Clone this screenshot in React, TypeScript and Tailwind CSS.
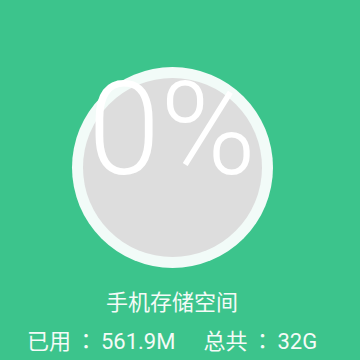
import React from 'react';

const font = { fontFamily: 'Roboto, "Noto Sans CJK SC", sans-serif' };
const colon = { fontFamily: '"Noto Sans CJK TC", sans-serif' };

export default function App() {
  return (
    <div className="w-[360px] h-[360px] bg-[#3cc48c] overflow-hidden" style={font}>
      <div className="w-[344px] flex flex-col items-center pt-[67px]">
        <div className="relative w-[201px] h-[201px] rounded-full bg-[#f2fbf8] p-[11px]">
          <div className="w-full h-full rounded-full bg-[#dddddd]" />
          <div className="absolute left-0 right-0 top-[-12px] text-center text-white text-[130px] leading-[150px] font-light">
            0%
          </div>
        </div>
        <div className="mt-[22px] text-[22px] leading-[26px] text-[#f4fbf7]">手机存储空间</div>
        <div className="mt-[10px] text-[22px] leading-[26px] text-[#f4fbf7] flex">
          <span>
            已用<span className="mx-[4px]" style={colon}>：</span>561.9M
          </span>
          <span className="ml-[28px]">
            总共<span className="mx-[4px]" style={colon}>：</span>32G
          </span>
        </div>
      </div>
    </div>
  );
}
